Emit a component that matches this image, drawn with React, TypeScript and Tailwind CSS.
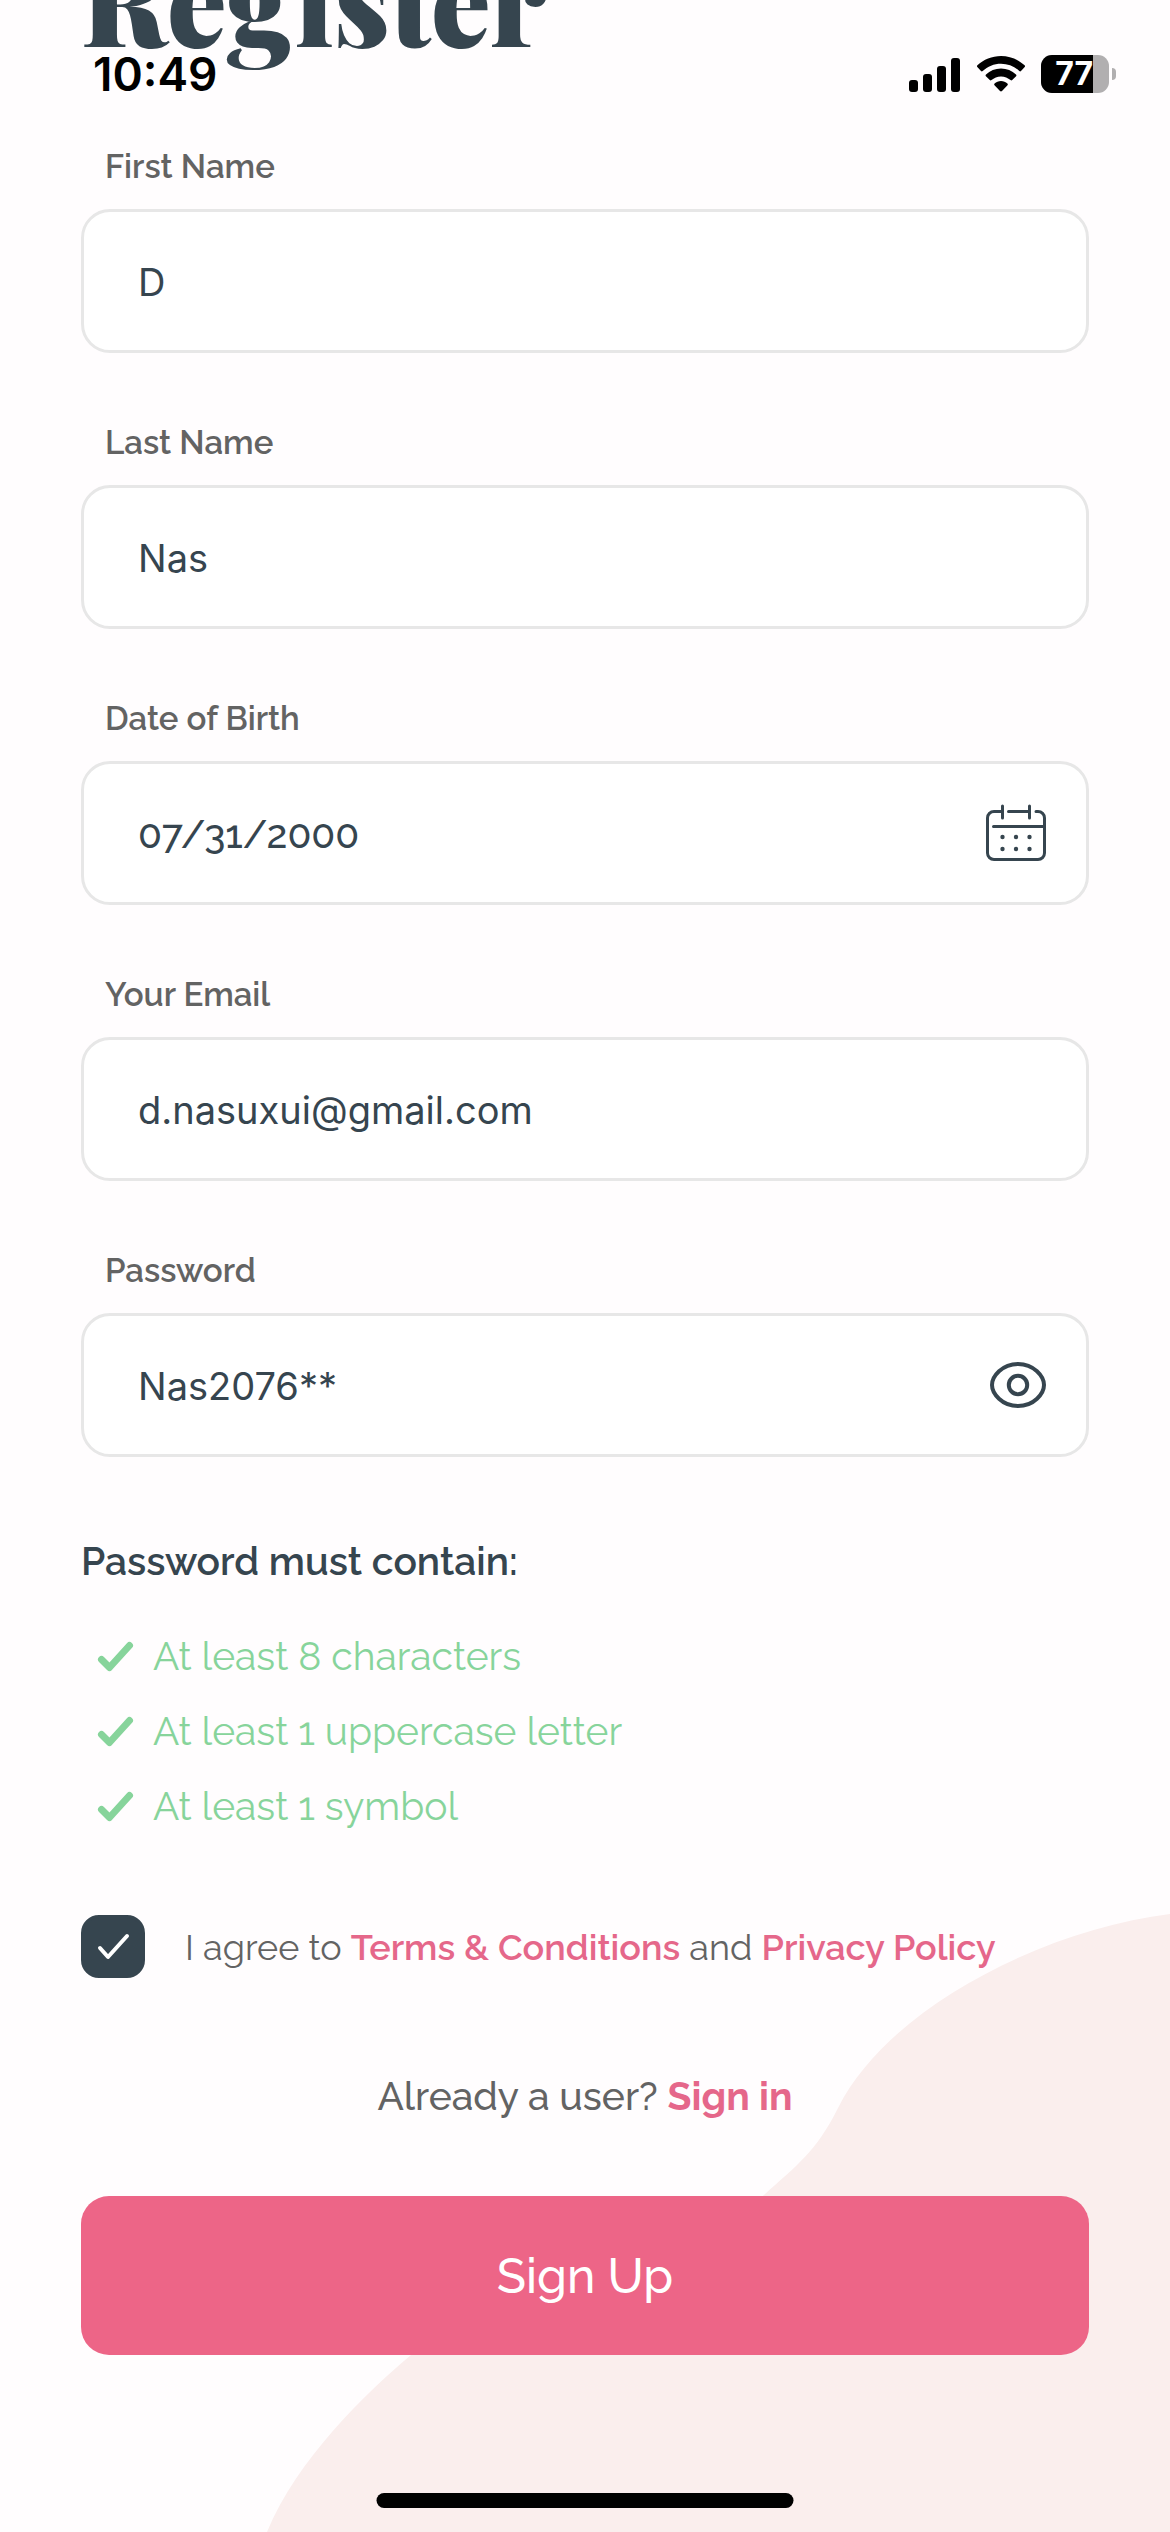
import { useState } from 'react';
import type { ReactNode } from 'react';

interface FieldProps {
  id: string;
  label: string;
  value: string;
  onChange: (value: string) => void;
  type?: string;
  inputClass?: string;
  children?: ReactNode;
}

const requirements = ['At least 8 characters', 'At least 1 uppercase letter', 'At least 1 symbol'];

function StatusBar() {
  return (
    <div className="absolute inset-x-0 top-0 z-10 flex h-[148px] items-center justify-between pr-[54px] pl-[93px] text-black">
      <span className="font-['Inter',sans-serif] text-[46px] leading-none font-semibold">10:49</span>
      <div className="flex items-center gap-4">
        <svg className="h-[36px] w-[52px]" viewBox="0 0 52 36" fill="currentColor" aria-hidden="true">
          <rect x="0" y="24" width="9" height="12" rx="3" />
          <rect x="14" y="18" width="9" height="18" rx="3" />
          <rect x="28" y="10" width="9" height="26" rx="3" />
          <rect x="42" y="2" width="9" height="34" rx="3" />
        </svg>
        <svg className="h-[36px] w-[48px]" viewBox="0 0 48 36" fill="currentColor" aria-hidden="true">
          <path d="M24 0C33 0 41.500 3.500 47.600 9.300C48.200 9.900 48.200 10.500 47.700 11.100L44 15C43.500 15.500 42.900 15.500 42.300 15C37.400 10.400 31 7.700 24 7.700S10.600 10.400 5.700 15C5.100 15.500 4.500 15.500 4 15L.3 11.100C-.2 10.500-.2 9.900.4 9.300C6.500 3.500 15 0 24 0Z" />
          <path d="M24 12.500C29.800 12.500 35 14.700 39 18.400C39.600 19 39.600 19.600 39.100 20.200L35.200 24.100C34.700 24.600 34.100 24.600 33.500 24.100C31 21.800 27.700 20.400 24 20.400S17 21.800 14.500 24.100C13.900 24.600 13.300 24.600 12.800 24.100L8.900 20.200C8.400 19.600 8.400 19 9 18.400C13 14.700 18.200 12.500 24 12.500Z" />
          <path d="M24 25C26.500 25 28.700 26 30.400 27.500C31 28.100 31 28.700 30.500 29.200L25 35C24.400 35.600 23.600 35.600 23 35L17.500 29.200C17 28.700 17 28.100 17.600 27.500C19.300 26 21.500 25 24 25Z" />
        </svg>
        <div className="flex items-center gap-[3px]">
          <div className="flex h-[38px] w-[68px] overflow-hidden rounded-[11px] bg-[#b1afb0]">
            <span className="flex w-[52px] items-center justify-end bg-black font-['Inter',sans-serif] text-[32px] leading-none font-bold text-white">
              77
            </span>
          </div>
          <div className="h-[12px] w-[4px] rounded-r-full bg-[#b1afb0]" />
        </div>
      </div>
    </div>
  );
}

function CalendarIcon() {
  return (
    <svg className="h-[58px] w-[60px]" viewBox="0 0 60 58" fill="none" stroke="currentColor" strokeWidth="3" strokeLinecap="round" aria-hidden="true">
      <path d="M16 7.500H8A6.500 6.500 0 0 0 1.500 14V49A6.500 6.500 0 0 0 8 55.500H52A6.500 6.500 0 0 0 58.500 49V14A6.500 6.500 0 0 0 52 7.500H50M22.500 7.500H43M16.500 2V14M43.500 2V14M7.500 22.500H58" />
      <g fill="currentColor" stroke="none">
        <circle cx="16.500" cy="33" r="2.200" />
        <circle cx="30" cy="33" r="2.200" />
        <circle cx="43.500" cy="33" r="2.200" />
        <circle cx="16.500" cy="45" r="2.200" />
        <circle cx="30" cy="45" r="2.200" />
        <circle cx="43.500" cy="45" r="2.200" />
      </g>
    </svg>
  );
}

function EyeIcon() {
  return (
    <svg className="h-[46px] w-[56px]" viewBox="0 0 56 46" fill="none" stroke="currentColor" strokeWidth="4" aria-hidden="true">
      <path d="M28 2C44 2 54 14.500 54 23S44 44 28 44S2 31.500 2 23S12 2 28 2Z" />
      <circle cx="28" cy="23" r="9.200" />
    </svg>
  );
}

function Field({ id, label, value, onChange, type = 'text', inputClass = "font-['Inter',sans-serif] text-[38px]", children }: FieldProps) {
  return (
    <div className="flex flex-col gap-5">
      <label htmlFor={id} className="self-start pl-6 text-[33px] leading-[44px] font-semibold text-[#636363]">
        {label}
      </label>
      <div className="flex h-[144px] items-center rounded-[29px] border-3 border-[#e7e7e7] bg-white pr-10 pl-[54px]">
        <input
          id={id}
          type={type}
          value={value}
          onChange={(e) => onChange(e.target.value)}
          className={`h-full min-w-0 flex-1 bg-transparent pt-0.5 outline-none ${inputClass}`}
        />
        {children}
      </div>
    </div>
  );
}

function App() {
  const [firstName, setFirstName] = useState('D');
  const [lastName, setLastName] = useState('Nas');
  const [birthDate, setBirthDate] = useState('07/31/2000');
  const [email, setEmail] = useState('d.nasuxui@gmail.com');
  const [password, setPassword] = useState('Nas2076**');
  const [showPassword, setShowPassword] = useState(true);
  const [agreed, setAgreed] = useState(true);

  return (
    <div className="relative min-h-screen overflow-hidden bg-[#fffdfe] font-['Raleway','Lato',sans-serif] text-[#36454f]">
      <svg className="absolute right-0 bottom-0 h-[618px] w-[903px]" viewBox="0 0 903 618" fill="#faeeed" aria-hidden="true">
        <path d="M903 0C780 15 622 92 571 194C549 238 530 251 497 281C400 365 250 360 144 441C100 478 30 545 0 618H903Z" />
      </svg>

      <StatusBar />

      <main className="relative px-[81px]">
        <h1 className="-mt-[70px] font-['Playfair_Display','Liberation_Serif',serif] text-[119px] leading-[136px] font-black">Register</h1>

        <form className="mt-[79px] flex flex-col" onSubmit={(e) => e.preventDefault()}>
          <div className="flex flex-col gap-[68px]">
            <Field id="first-name" label="First Name" value={firstName} onChange={setFirstName} />
            <Field id="last-name" label="Last Name" value={lastName} onChange={setLastName} />
            <Field id="birth-date" label="Date of Birth" value={birthDate} onChange={setBirthDate} inputClass="text-[39px] font-medium">
              <button type="button" aria-label="Choose date">
                <CalendarIcon />
              </button>
            </Field>
            <Field id="email" label="Your Email" type="email" value={email} onChange={setEmail} />
            <Field id="password" label="Password" type={showPassword ? 'text' : 'password'} value={password} onChange={setPassword}>
              <button type="button" aria-label="Toggle password" onClick={() => setShowPassword(!showPassword)}>
                <EyeIcon />
              </button>
            </Field>
          </div>

          <h2 className="mt-[79px] text-[39px] leading-[50px] font-semibold">Password must contain:</h2>
          <ul className="mt-[45px] flex flex-col gap-[25px] text-[39px] leading-[50px] text-[#87d49b]">
            {requirements.map((text) => (
              <li key={text} className="flex items-center gap-[19px] pl-4">
                <svg className="h-[32px] w-[37px]" viewBox="0 0 37 32" fill="none" stroke="currentColor" strokeWidth="7" strokeLinecap="round" strokeLinejoin="round" aria-hidden="true">
                  <path d="M4.500 19.500L12.500 27.500L32.500 5.500" />
                </svg>
                {text}
              </li>
            ))}
          </ul>

          <div className="mt-[84px] flex items-center gap-10">
            <div className="relative h-[63px] w-[64px]">
              <input
                id="agree"
                type="checkbox"
                checked={agreed}
                onChange={(e) => setAgreed(e.target.checked)}
                className="block h-full w-full appearance-none rounded-[18px] border-3 border-[#36454f] checked:bg-[#36454f]"
              />
              <svg className="pointer-events-none absolute inset-0 h-full w-full" viewBox="0 0 64 63" fill="none" stroke="white" strokeWidth="4" strokeLinecap="round" strokeLinejoin="round" aria-hidden="true">
                <path d="M19 33L27 42L46 21" />
              </svg>
            </div>
            <label htmlFor="agree" className="text-[36px] leading-[48px] text-[#636363]">
              I agree to{' '}
              <a href="#terms" className="font-semibold text-[#e5678a]">Terms &amp; Conditions</a>
              {' '}and{' '}
              <a href="#privacy" className="font-semibold text-[#e5678a]">Privacy Policy</a>
            </label>
          </div>

          <p className="mt-[93px] text-center text-[39px] leading-[50px] font-medium text-[#636363]">
            Already a user?{' '}
            <a href="#signin" className="font-bold text-[#e5678a]">Sign in</a>
          </p>

          <button type="submit" className="mt-[75px] h-[159px] rounded-[28px] bg-[#ed6587] text-[48px] font-medium text-white">
            Sign Up
          </button>
        </form>
      </main>

      <div className="absolute bottom-6 left-1/2 h-[15px] w-[417px] -translate-x-1/2 rounded-full bg-black" />
    </div>
  );
}

export default App;
